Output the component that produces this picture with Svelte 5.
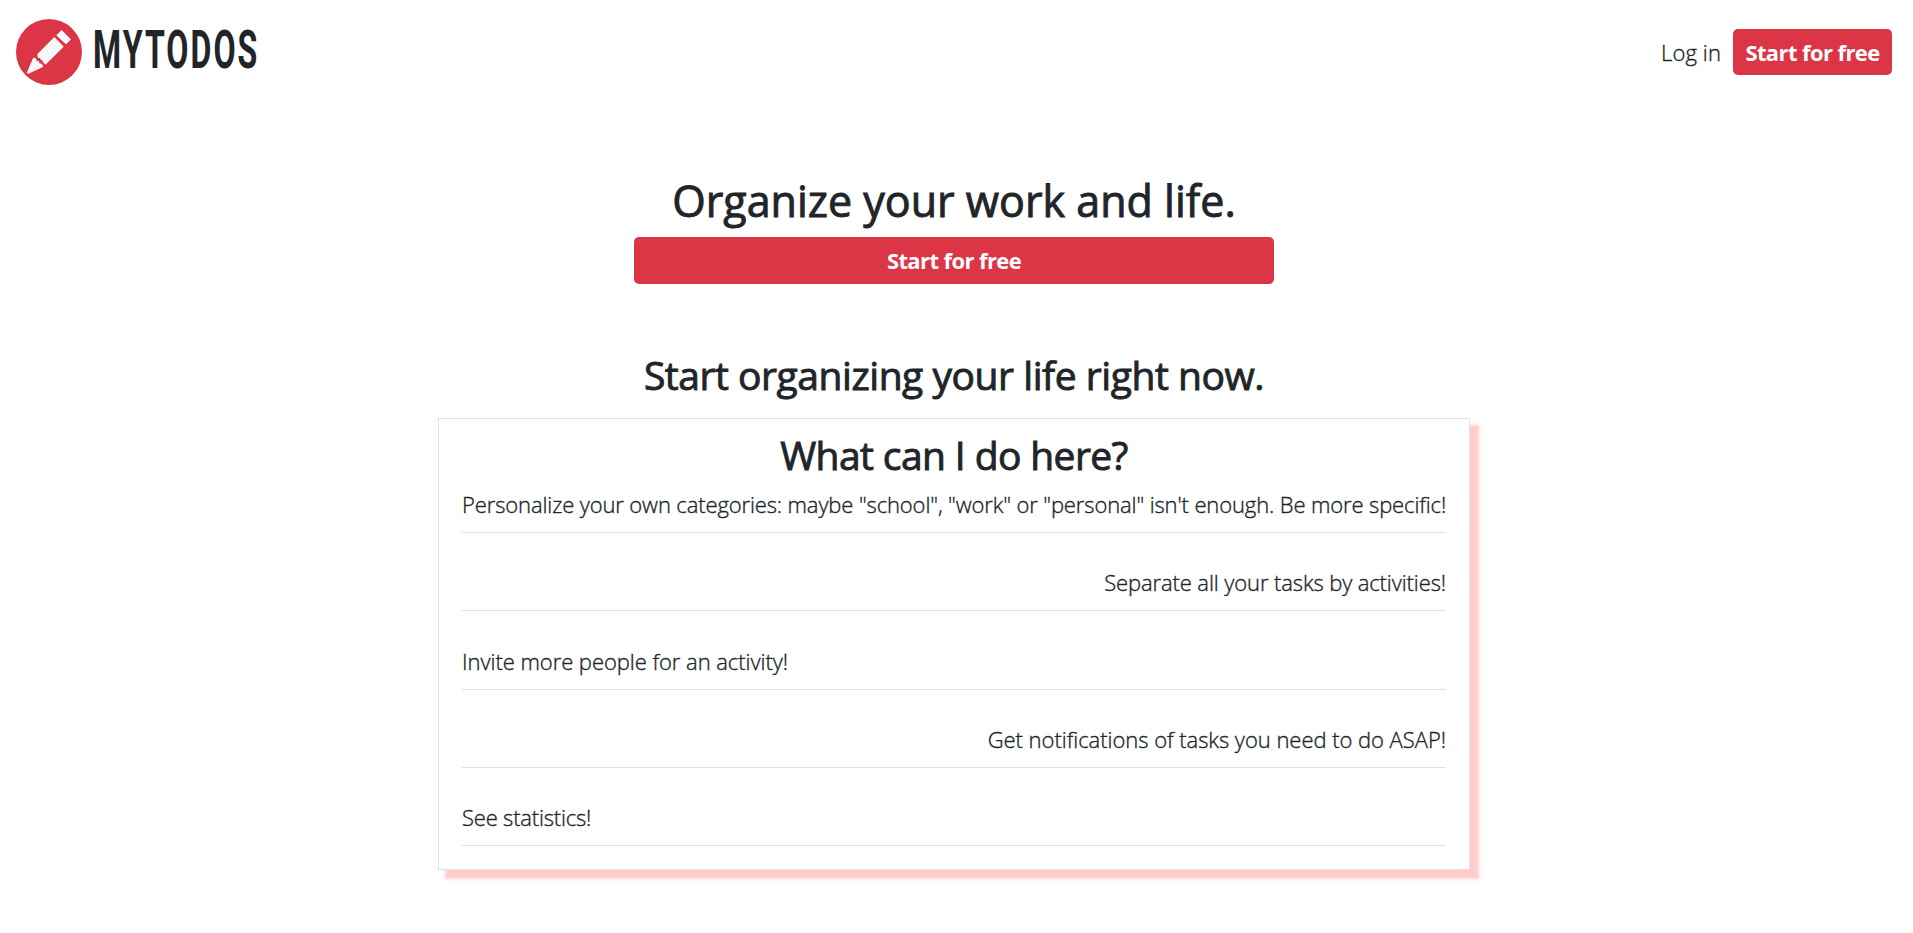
<script>
  const features = [
    { text: 'Personalize your own categories: maybe "school", "work" or "personal" isn\'t enough. Be more specific!', cls: 'categories' },
    { text: 'Separate all your tasks by activities!', cls: 'tasks end' },
    { text: 'Invite more people for an activity!', cls: 'people' },
    { text: 'Get notifications of tasks you need to do ASAP!', cls: 'alerts end' },
    { text: 'See statistics!', cls: 'stats' },
  ];
</script>

<header>
  <a class="brand" href="#home" aria-label="MYTODOS">
    <svg width="260" height="66" viewBox="0 0 260 66">
      <circle cx="33" cy="33" r="33" fill="#dc3545" />
      <g fill="#f8f9fa" stroke="#f8f9fa" stroke-width="1" stroke-linejoin="round">
        <path d="M40.8 16.4 45.7 11.5 54.4 20.3 50 24.9Z" />
        <path d="M38.3 18.5 47.2 27.7 29.6 45 27.3 43.3 27.3 41.4 25.2 40.8 24.6 38.8 22.2 38.2 21.9 35Z" />
        <path d="M17.5 39.2 19.6 39.7 20.3 42.3 22.6 42.6 23.2 44.9 25.5 45.1 26.8 47.6 12 54.4 11.3 53.7Z" />
      </g>
      <text transform="translate(77 49) scale(.6 1)" textLength="274" lengthAdjust="spacing">MYTODOS</text>
    </svg>
  </a>
  <nav>
    <a class="login" href="#login">Log in</a>
    <a class="btn" href="#start"><span>Start for free</span></a>
  </nav>
</header>

<main>
  <h1>Organize your work and life.</h1>
  <a class="btn wide" href="#start"><span>Start for free</span></a>
  <h2 class="lead">Start organizing your life right now.</h2>
  <section>
    <h2 class="ask">What can I do here?</h2>
    <ul>
      {#each features as f}
        <li class={f.cls}><span>{f.text}</span></li>
      {/each}
    </ul>
  </section>
</main>

<style>
  :global(body) {
    background: #fff;
    color: #212529;
    font-family: "Segoe UI", "Open Sans", "Noto Sans", sans-serif;
    font-size: 22px;
    line-height: 33px;
  }
  a { color: inherit; text-decoration: none; }
  header {
    display: flex;
    justify-content: space-between;
    height: 104px;
    padding: 0 21px 0 16px;
    box-sizing: border-box;
  }
  .brand { padding-top: 19px; }
  .brand svg { display: block; overflow: visible; }
  .brand text {
    font-family: Roboto, sans-serif;
    font-weight: 700;
    font-size: 53.5px;
    fill: #212529;
  }
  nav { display: flex; align-items: center; gap: 12px; height: 104px; }
  .login { font-weight: 300; letter-spacing: 0.1px; -webkit-text-stroke: 0.35px currentColor; }
  .btn {
    display: flex;
    justify-content: center;
    align-items: center;
    box-sizing: border-box;
    width: 159px;
    height: 46px;
    border-radius: 5px;
    background: #dc3545;
    color: #fff;
    font-weight: 700;
    white-space: nowrap;
    letter-spacing: -0.6px;
  }
  main {
    display: flex;
    flex-direction: column;
    align-items: center;
    box-sizing: border-box;
    min-height: 829px;
    padding-right: 5px;
  }
  h1, h2 {
    margin: 0;
    font-weight: 400;
    white-space: nowrap;
    -webkit-text-stroke: 0.9px currentColor;
  }
  h1 { margin-top: 71px; font-size: 43px; line-height: 52px; }
  h2 { font-size: 39px; line-height: 48px; }
  .wide { width: 640px; height: 47px; margin-top: 10px; }
  .lead { margin-top: 67px; letter-spacing: -0.45px; }
  .ask { letter-spacing: -0.6px; }
  section {
    box-sizing: border-box;
    width: 1032px;
    height: 452px;
    margin-top: 19px;
    padding: 12px 23px;
    border: 1px solid #dee2e6;
    background: #fff;
    box-shadow: 8px 8px 3px 1px #ffcccc;
    text-align: center;
  }
  ul {
    margin: 8px 0 0;
    padding: 0;
    list-style: none;
    text-align: left;
    font-weight: 300;
  }
  li span { -webkit-text-stroke: 0.35px currentColor; }
  li {
    box-sizing: border-box;
    height: 78.3px;
    padding-top: 33.4px;
    border-bottom: 1px solid #dee2e6;
    white-space: nowrap;
  }
  li:first-child { height: 46px; padding-top: 1px; }
  .categories { letter-spacing: -0.125px; }
  .tasks { letter-spacing: -0.11px; }
  .people { letter-spacing: -0.05px; }
  .alerts { letter-spacing: -0.04px; }
  .stats { letter-spacing: -0.2px; }
  .end { text-align: right; }
</style>
